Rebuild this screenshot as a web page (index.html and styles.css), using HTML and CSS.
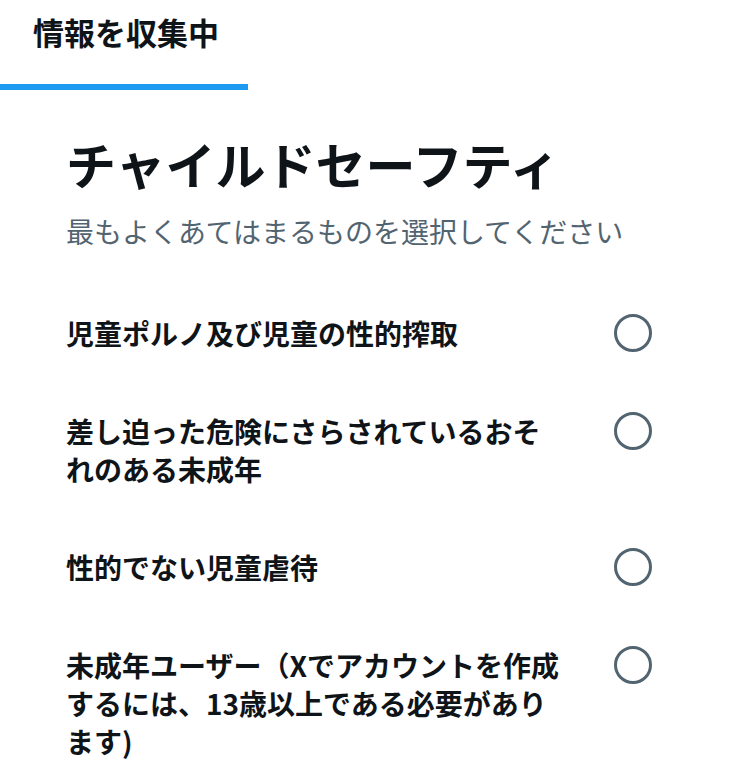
FILE: index.html
```html
<!DOCTYPE html>
<html lang="ja">
<head>
    <meta charset="UTF-8">
    <meta name="viewport" content="width=device-width, initial-scale=1.0">
    <title>チャイルドセーフティ</title>
    <link rel="stylesheet" href="styles.css">
</head>
<body>
    <div class="tabs">
        <div class="tab active">情報を収集中</div>
    </div>

    <div class="content">
        <h1>チャイルドセーフティ</h1>
        <p class="subtitle">最もよくあてはまるものを選択してください</p>

        <div class="options">
            <label class="option">
                <span class="option-text">児童ポルノ及び児童の性的搾取</span>
                <span class="radio"></span>
            </label>
            <label class="option">
                <span class="option-text">差し迫った危険にさらされているおそれのある未成年</span>
                <span class="radio"></span>
            </label>
            <label class="option">
                <span class="option-text">性的でない児童虐待</span>
                <span class="radio"></span>
            </label>
            <label class="option">
                <span class="option-text">未成年ユーザー（Xでアカウントを作成するには、13歳以上である必要があります)</span>
                <span class="radio"></span>
            </label>
        </div>
    </div>
</body>
</html>
```

FILE: styles.css
```css
body {
    font-family: "Noto Sans CJK JP", "Noto Sans", sans-serif;
    background-color: #ffffff;
    color: #0f1419;
    margin: 0;
    padding: 0;
}
.tabs {
    display: flex;
}
.tab {
    width: 248px;
    box-sizing: border-box;
    padding: 12px 0 32px 33px;
    font-size: 31px;
    line-height: 40px;
    font-weight: bold;
}
.tab.active {
    border-bottom: 6px solid #1d9bf0;
}
.content {
    padding: 0 98px 0 66px;
}
h1 {
    margin: 43px 0 0;
    font-size: 50px;
    line-height: 60px;
    font-weight: bold;
}
.subtitle {
    margin: 18px 0 0;
    font-size: 28px;
    line-height: 40px;
    color: #536471;
}
.options {
    margin-top: 33px;
}
.option {
    display: flex;
    align-items: flex-start;
    justify-content: space-between;
    padding: 30px 0;
    cursor: pointer;
}
.option-text {
    width: 500px;
    font-size: 28px;
    line-height: 38px;
    font-weight: bold;
}
.radio {
    flex-shrink: 0;
    width: 38px;
    height: 38px;
    box-sizing: border-box;
    border: 3.5px solid #536471;
    border-radius: 50%;
}
```
